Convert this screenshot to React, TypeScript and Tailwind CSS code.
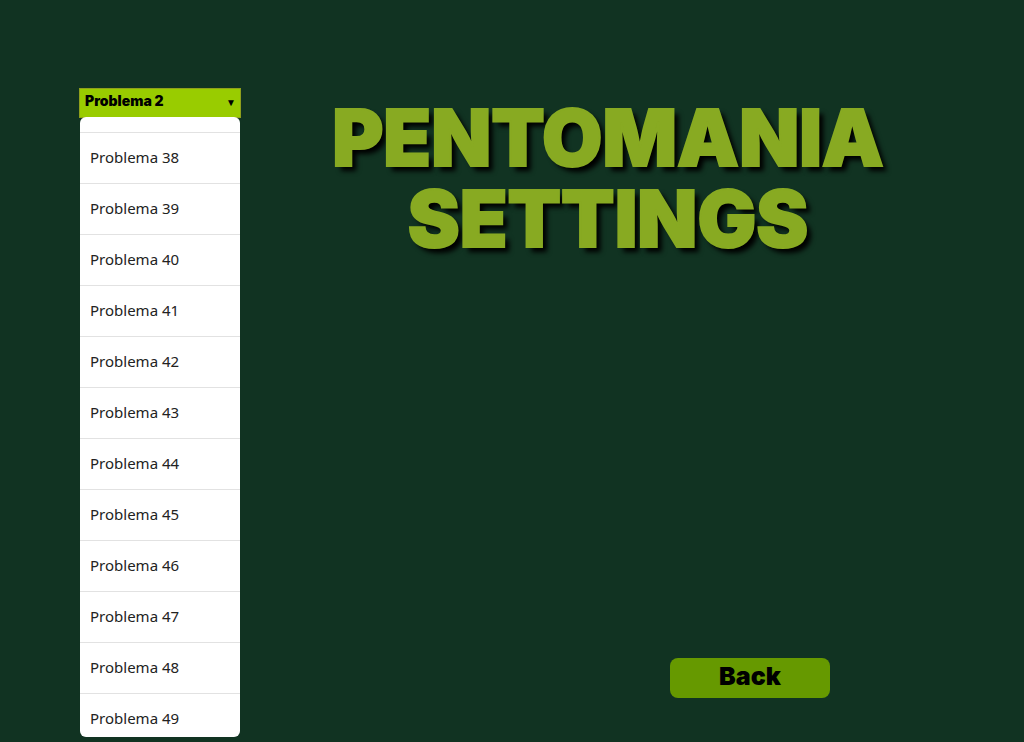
import { useLayoutEffect, useRef, useState } from 'react';

const problems = Array.from({ length: 50 }, (_, i) => `Problema ${i + 1}`);
const INITIAL_SCROLL = 1871;

function ProblemPicker() {
  const [selected, setSelected] = useState('Problema 2');
  const listRef = useRef<HTMLUListElement>(null);

  useLayoutEffect(() => {
    if (listRef.current) listRef.current.scrollTop = INITIAL_SCROLL;
  }, []);

  return (
    <div className="relative w-40 shrink-0 self-start">
      <select
        aria-label="Problema"
        value={selected}
        onChange={(e) => setSelected(e.target.value)}
        className="block h-7 w-full appearance-none bg-[#99cc00] px-[5px] pb-1 font-['Inter','Noto_Sans',sans-serif] text-sm font-black text-black ring-1 ring-[#8f9f1c] outline-none"
      >
        {problems.map((name) => (
          <option key={name}>{name}</option>
        ))}
      </select>
      <span aria-hidden="true" className="pointer-events-none absolute top-[5px] right-1 text-[10px] leading-4 text-black">
        ▼
      </span>
      <ul
        ref={listRef}
        className="absolute top-full left-0 h-[620px] w-full overflow-y-auto rounded-md bg-white [scrollbar-width:none]"
      >
        {problems.map((name) => (
          <li key={name} className="border-b border-[#e2e2e2]">
            <button
              type="button"
              onClick={() => setSelected(name)}
              className="block h-[50px] w-full px-2.5 pb-0.5 text-left text-[15px] text-[#222222]"
            >
              {name}
            </button>
          </li>
        ))}
      </ul>
    </div>
  );
}

export default function App() {
  return (
    <main className="flex min-h-screen bg-[#113322] pt-[89px] pr-20 pb-11 pl-20 font-['Noto_Sans',sans-serif]">
      <ProblemPicker />
      <section className="flex flex-1 flex-col">
        <h1 className="mt-2 ml-8 text-center font-['Inter','Noto_Sans',sans-serif] text-[78px] leading-[81px] font-black text-[#88aa22] uppercase [-webkit-text-stroke:2px_#88aa22] [text-shadow:5px_5px_5px_black]">
          Pentomania
          <br />
          Settings
        </h1>
        <button
          type="button"
          className="mt-auto mr-[114px] h-10 w-40 self-end rounded-lg bg-[#669900] pb-1 font-['Inter','Noto_Sans',sans-serif] text-[25px] leading-8 font-black text-black"
        >
          Back
        </button>
      </section>
    </main>
  );
}
